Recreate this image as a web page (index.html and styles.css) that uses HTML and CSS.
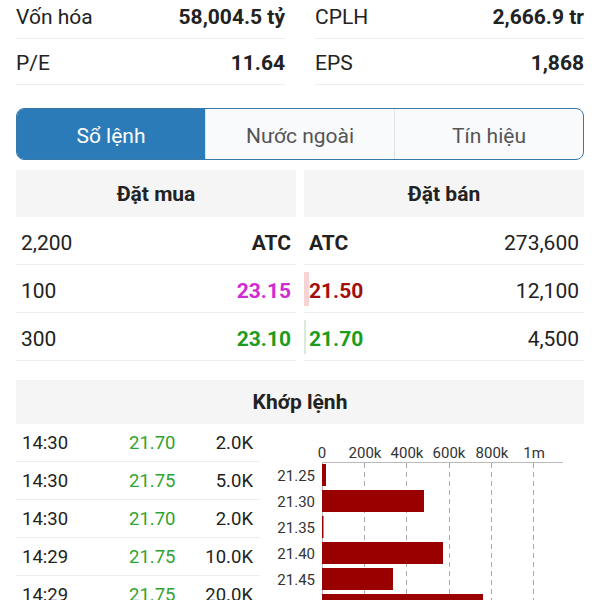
FILE: index.html
```html
<!DOCTYPE html>
<html lang="vi">
<head>
    <meta charset="UTF-8">
    <meta name="viewport" content="width=device-width, initial-scale=1.0">
    <title>Sổ lệnh</title>
    <link rel="stylesheet" href="styles.css">
</head>
<body>

    <div class="page">
        <!-- Company stats -->
        <div class="stats">
            <div class="stat"><span>Vốn hóa</span><b>58,004.5 tỷ</b></div>
            <div class="stat"><span>CPLH</span><b>2,666.9 tr</b></div>
            <div class="stat"><span>P/E</span><b>11.64</b></div>
            <div class="stat"><span>EPS</span><b>1,868</b></div>
        </div>

        <div class="tabs">
            <div class="tab active">Sổ lệnh</div>
            <div class="tab">Nước ngoài</div>
            <div class="tab">Tín hiệu</div>
        </div>

        <!-- Order book -->
        <div class="book">
            <div class="side">
                <div class="side-head">Đặt mua</div>
                <div class="book-row"><span>2,200</span><b>ATC</b></div>
                <div class="book-row"><span>100</span><b class="ceil">23.15</b></div>
                <div class="book-row"><span>300</span><b class="up">23.10</b></div>
            </div>
            <div class="side">
                <div class="side-head">Đặt bán</div>
                <div class="book-row"><b>ATC</b><span>273,600</span></div>
                <div class="book-row">
                    <i class="vol-bar sell" style="width: 5px"></i>
                    <b class="down">21.50</b><span>12,100</span>
                </div>
                <div class="book-row">
                    <i class="vol-bar buy" style="width: 2px"></i>
                    <b class="up">21.70</b><span>4,500</span>
                </div>
            </div>
        </div>

        <!-- Matched orders -->
        <div class="match">
            <div class="match-head">Khớp lệnh</div>
            <div class="match-body">
                <div class="ticks">
                    <div class="tick"><span>14:30</span><span class="tick-price">21.70</span><span>2.0K</span></div>
                    <div class="tick"><span>14:30</span><span class="tick-price">21.75</span><span>5.0K</span></div>
                    <div class="tick"><span>14:30</span><span class="tick-price">21.70</span><span>2.0K</span></div>
                    <div class="tick"><span>14:29</span><span class="tick-price">21.75</span><span>10.0K</span></div>
                    <div class="tick"><span>14:29</span><span class="tick-price">21.75</span><span>20.0K</span></div>
                </div>

                <svg class="chart" width="324" height="176" viewBox="0 0 324 176">
                    <g class="grid">
                        <line x1="104.5" y1="39" x2="104.5" y2="176"/>
                        <line x1="146.5" y1="39" x2="146.5" y2="176"/>
                        <line x1="189.5" y1="39" x2="189.5" y2="176"/>
                        <line x1="231.5" y1="39" x2="231.5" y2="176"/>
                        <line x1="273.5" y1="39" x2="273.5" y2="176"/>
                    </g>
                    <line class="axis" x1="62" y1="38.5" x2="303" y2="38.5"/>
                    <line class="axis" x1="62.5" y1="38" x2="62.5" y2="176"/>

                    <g class="x-labels">
                        <text x="62" y="34">0</text>
                        <text x="105" y="34">200k</text>
                        <text x="147" y="34">400k</text>
                        <text x="189" y="34">600k</text>
                        <text x="232" y="34">800k</text>
                        <text x="274" y="34">1m</text>
                    </g>

                    <g class="bars">
                        <rect x="62" y="40" width="4" height="22"/>
                        <rect x="62" y="66" width="102" height="22"/>
                        <rect x="62" y="92" width="1.5" height="22"/>
                        <rect x="62" y="118" width="121" height="22"/>
                        <rect x="62" y="144" width="71" height="22"/>
                        <rect x="62" y="170" width="161" height="22"/>
                    </g>

                    <g class="y-labels">
                        <text x="55" y="57">21.25</text>
                        <text x="55" y="83">21.30</text>
                        <text x="55" y="109">21.35</text>
                        <text x="55" y="135">21.40</text>
                        <text x="55" y="161">21.45</text>
                    </g>
                </svg>
            </div>
        </div>
    </div>

</body>
</html>
```

FILE: styles.css
```css
* {
    box-sizing: border-box;
}
body {
    font-family: Roboto, 'Liberation Sans', sans-serif;
    background-color: #fff;
    color: #222;
    margin: 0;
    padding: 0 16px;
    overflow: hidden;
}
.page {
    margin-top: -7px;
}

/* stats */
.stats {
    display: grid;
    grid-template-columns: 1fr 1fr;
    column-gap: 30px;
}
.stat {
    display: flex;
    justify-content: space-between;
    align-items: center;
    height: 46px;
    padding-top: 2px;
    border-bottom: 1px solid #eee;
    font-size: 21px;
}
.stat b {
    font-weight: 700;
}

/* tabs */
.tabs {
    display: flex;
    margin-top: 23px;
    height: 52px;
    border: 1px solid #3a78a8;
    border-radius: 8px;
    overflow: hidden;
    background-color: #f8fafc;
}
.tab {
    flex: 1;
    display: flex;
    align-items: center;
    justify-content: center;
    padding-top: 3px;
    font-size: 21px;
    color: #555;
}
.tab + .tab {
    border-left: 1px solid #dde3e8;
}
.tab.active {
    background-color: #2b7bb9;
    color: #fff;
}

/* order book */
.book {
    display: flex;
    gap: 8px;
    margin-top: 10px;
}
.side {
    flex: 1;
}
.side-head {
    height: 47px;
    display: flex;
    align-items: center;
    justify-content: center;
    background-color: #f5f5f5;
    font-size: 21px;
    font-weight: 700;
}
.book-row {
    position: relative;
    display: flex;
    justify-content: space-between;
    align-items: center;
    height: 48px;
    padding: 4px 5px 0;
    border-bottom: 1px solid #eee;
    font-size: 21px;
}
.book-row b {
    font-weight: 700;
}
.vol-bar {
    position: absolute;
    left: 0;
    top: 7px;
    bottom: 6px;
}
.vol-bar.sell {
    background-color: #f7d4d4;
}
.vol-bar.buy {
    background-color: #d6ecd6;
}
.ceil {
    color: #d22ad2;
}
.down {
    color: #a30f0f;
}
.up {
    color: #1c9c1c;
}

/* matched orders */
.match {
    margin-top: 19px;
}
.match-head {
    height: 44px;
    display: flex;
    align-items: center;
    justify-content: center;
    background-color: #f5f5f5;
    font-size: 21px;
    font-weight: 700;
}
.match-body {
    display: flex;
}
.ticks {
    width: 244px;
}
.tick {
    display: grid;
    grid-template-columns: 107px 1fr auto;
    align-items: center;
    height: 38px;
    padding: 1px 7px 0 6px;
    border-bottom: 1px solid #eee;
    font-size: 18.5px;
}
.tick-price {
    color: #2fa32f;
}
.chart {
    display: block;
    flex: none;
}
.chart text {
    font-family: Roboto, 'Liberation Sans', sans-serif;
    font-size: 15px;
    fill: #333;
}
.x-labels text {
    text-anchor: middle;
}
.y-labels text {
    text-anchor: end;
}
.grid line {
    stroke: #aaa;
    stroke-width: 1;
    stroke-dasharray: 5 4;
}
.axis {
    stroke: #bbb;
    stroke-width: 1;
}
.bars rect {
    fill: #990000;
}
```
